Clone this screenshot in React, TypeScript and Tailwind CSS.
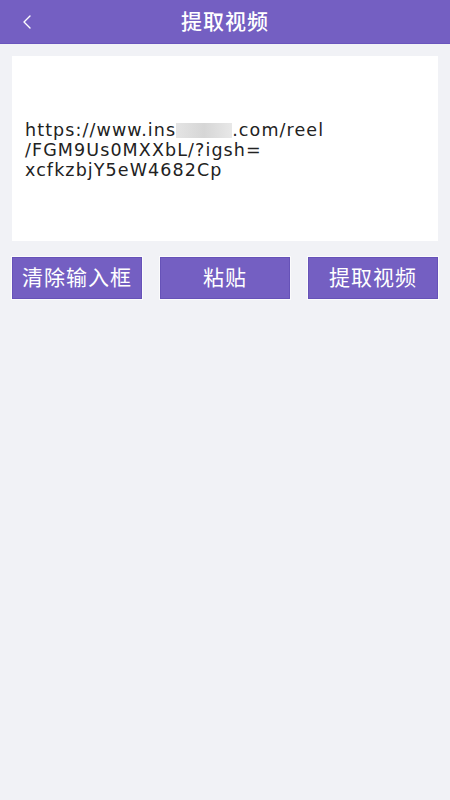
import React from 'react'

const font = { fontFamily: '"Noto Sans", "Noto Sans CJK SC", sans-serif' }
const urlFont = { fontFamily: '"DejaVu Sans", "Noto Sans", sans-serif' }

function Btn({ label }: { label: string }) {
  return (
    <button className="flex h-[42px] items-center justify-center border border-[#6652b8] bg-[#745fc2] text-[21px] tracking-[1px] text-white ring-1 ring-white/70">
      {label}
    </button>
  )
}

export default function App() {
  return (
    <div className="flex min-h-[800px] flex-col bg-[#f1f2f6]" style={font}>
      <header className="relative flex h-[44px] items-center justify-center border-b border-[#6a55bd] bg-[#745fc2]">
        <button className="absolute left-[20px] top-[13px] text-white">
          <svg width="14" height="18" viewBox="0 0 14 18" fill="none">
            <path d="M10 3 L4 9 L10 15" stroke="white" strokeWidth="1.4" strokeLinecap="round" strokeLinejoin="round" />
          </svg>
        </button>
        <h1 className="text-[21px] font-medium tracking-[1px] text-white">提取视频</h1>
      </header>

      <main className="flex flex-col px-[12px] pt-[12px]">
        <div className="flex h-[185px] flex-col justify-center bg-white px-[13px] pt-[3px]">
          <p className="text-[17.5px] leading-[20px] tracking-[1.1px] text-[#222]" style={urlFont}>
            <span className="block whitespace-nowrap">
              https://www.ins
              <span className="inline-block h-[15px] w-[56px] translate-y-[2px] bg-gradient-to-r from-[#e4e4e4] via-[#d6d6d6] to-[#e8e8e8] align-baseline" />
              .com/reel
            </span>
            <span className="block">/FGM9Us0MXXbL/?igsh=</span>
            <span className="block">xcfkzbjY5eW4682Cp</span>
          </p>
        </div>

        <div className="mt-[16px] grid grid-cols-3 gap-[18px]">
          <Btn label="清除输入框" />
          <Btn label="粘贴" />
          <Btn label="提取视频" />
        </div>
      </main>
    </div>
  )
}
